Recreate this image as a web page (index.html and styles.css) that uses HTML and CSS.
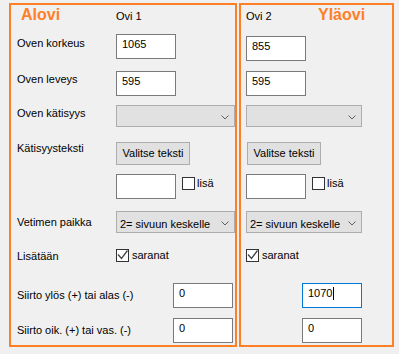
FILE: index.html
```html
<!DOCTYPE html>
<html>
<head>
<meta charset="utf-8">
<link rel="stylesheet" href="styles.css">
</head>
<body>
  <div class="form">
    <!-- Alovi -->
    <div class="panel panel-left">
      <div class="header">
        <span class="title title-left">Alovi</span>
        <span>Ovi 1</span>
      </div>
      <div class="row r1">
        <div class="label">Oven korkeus</div>
        <div class="textbox">1065</div>
      </div>
      <div class="row r2">
        <div class="label">Oven leveys</div>
        <div class="textbox">595</div>
      </div>
      <div class="row r3">
        <div class="label">Oven kätisyys</div>
        <div class="select select-left">
          <span></span>
          <svg class="chevron" width="8" height="5" viewBox="0 0 8 5"><polyline points="0.5,0.5 4,4 7.5,0.5" fill="none" stroke="#606060" stroke-width="1"/></svg>
        </div>
      </div>
      <div class="row r4">
        <div class="label">Kätisyysteksti</div>
        <button class="button">Valitse teksti</button>
      </div>
      <div class="row r5">
        <div class="label"></div>
        <div class="textbox"></div>
        <div class="check check-extra">
          <span class="box"></span>
          <span>lisä</span>
        </div>
      </div>
      <div class="row r6">
        <div class="label">Vetimen paikka</div>
        <div class="select select-left">
          <span>2= sivuun keskelle</span>
          <svg class="chevron" width="8" height="5" viewBox="0 0 8 5"><polyline points="0.5,0.5 4,4 7.5,0.5" fill="none" stroke="#606060" stroke-width="1"/></svg>
        </div>
      </div>
      <div class="row r7">
        <div class="label">Lisätään</div>
        <div class="check">
          <span class="box"><svg width="11" height="11" viewBox="0 0 11 11"><polyline points="1,4.5 4.5,8.5 10.5,0.5" fill="none" stroke="#444" stroke-width="1.3"/></svg></span>
          <span class="check-text">saranat</span>
        </div>
      </div>
      <div class="row r8">
        <div class="label label-wide">Siirto ylös (+) tai alas (-)</div>
        <div class="textbox">0</div>
      </div>
      <div class="row r9">
        <div class="label label-wide">Siirto oik. (+) tai vas. (-)</div>
        <div class="textbox">0</div>
      </div>
    </div>

    <!-- Yläovi -->
    <div class="panel panel-right">
      <div class="header">
        <span class="title-right-tag">Ovi 2</span>
        <span class="title">Yläovi</span>
      </div>
      <div class="row r1">
        <div class="textbox nudge">855</div>
      </div>
      <div class="row r2">
        <div class="textbox">595</div>
      </div>
      <div class="row r3">
        <div class="select select-right">
          <span></span>
          <svg class="chevron" width="8" height="5" viewBox="0 0 8 5"><polyline points="0.5,0.5 4,4 7.5,0.5" fill="none" stroke="#606060" stroke-width="1"/></svg>
        </div>
      </div>
      <div class="row r4">
        <button class="button button-right">Valitse teksti</button>
      </div>
      <div class="row r5">
        <div class="textbox"></div>
        <div class="check check-extra">
          <span class="box"></span>
          <span>lisä</span>
        </div>
      </div>
      <div class="row r6">
        <div class="select select-right">
          <span>2= sivuun keskelle</span>
          <svg class="chevron" width="8" height="5" viewBox="0 0 8 5"><polyline points="0.5,0.5 4,4 7.5,0.5" fill="none" stroke="#606060" stroke-width="1"/></svg>
        </div>
      </div>
      <div class="row r7">
        <div class="check">
          <span class="box"><svg width="11" height="11" viewBox="0 0 11 11"><polyline points="1,4.5 4.5,8.5 10.5,0.5" fill="none" stroke="#444" stroke-width="1.3"/></svg></span>
          <span class="check-text">saranat</span>
        </div>
      </div>
      <div class="row r8">
        <div class="textbox textbox-offset focused">1070<span class="caret"></span></div>
      </div>
      <div class="row r9">
        <div class="textbox textbox-offset">0</div>
      </div>
    </div>
  </div>
</body>
</html>
```

FILE: styles.css
```css
/* Windows-form look: grey surface, orange group frames */
body {
  margin: 0;
  background: #f0f0f0;
  font-family: "Liberation Sans", Arial, sans-serif;
  font-size: 11px;
  line-height: 13px;
  color: #000;
}

.form {
  display: flex;
  gap: 2px;
  padding: 3px 0 0 9px;
}

.panel {
  box-sizing: border-box;
  height: 344px;
  border: 2px solid #ff7f27;
}

.panel-left {
  width: 228px;
}

.panel-right {
  width: 155px;
}

.header {
  box-sizing: border-box;
  display: flex;
  align-items: baseline;
  height: 29px;
  padding-top: 1px;
}

.panel-left .header {
  padding-left: 10px;
}

.panel-right .header {
  padding-left: 5px;
}

.title {
  font-size: 16px;
  line-height: 18px;
  font-weight: bold;
  color: #ff7f27;
}

.title-left {
  width: 95px;
}

.title-right-tag {
  width: 72px;
}

/* rows: heights follow the control positions of the form */
.row {
  display: flex;
  align-items: flex-start;
}

.panel-right .row {
  padding-left: 5px;
}

.r1 { height: 37px; }
.r2 { height: 34px; }
.r3 { height: 37px; }
.r4 { height: 32px; }
.r5 { height: 37px; }
.r6 { height: 38px; }
.r7 { height: 34px; }
.r8 { height: 35px; }
.r9 { height: 25px; }

.label {
  width: 99px;
  margin-left: 6px;
}

.label-wide {
  width: 156px;
}

.r1 .label { padding-top: 3px; }
.r2 .label { padding-top: 2px; }
.r3 .label { padding-top: 2px; }
.r6 .label { padding-top: 5px; }
.r7 .label { padding-top: 1px; }
.r8 .label { padding-top: 6px; }
.r9 .label { padding-top: 6px; }

.textbox {
  box-sizing: border-box;
  width: 60px;
  height: 25px;
  padding: 3px 0 0 5px;
  border: 1px solid #7a7a7a;
  background: #fff;
  white-space: nowrap;
}

.textbox.nudge {
  margin-top: 2px;
}

.textbox-offset {
  margin-left: 56px;
}

.textbox.focused {
  border-color: #0078d7;
}

.caret {
  display: inline-block;
  width: 1px;
  height: 13px;
  margin-left: 1px;
  background: #000;
  vertical-align: top;
}

.select {
  box-sizing: border-box;
  display: flex;
  justify-content: space-between;
  align-items: flex-start;
  height: 22px;
  padding: 5px 5px 0 3px;
  line-height: 14px;
  border: 1px solid #adadad;
  background: #e1e1e1;
}

.select-left {
  width: 119px;
}

.select-right {
  width: 116px;
}

.chevron {
  margin-top: 4px;
}

.button {
  box-sizing: border-box;
  width: 74px;
  height: 23px;
  padding: 0;
  border: 1px solid #adadad;
  background: #e1e1e1;
  font: inherit;
  line-height: 13px;
  color: #000;
}

.button-right {
  margin-left: 1px;
}

.check {
  display: flex;
  align-items: flex-start;
  gap: 2px;
}

.check-extra {
  margin: 3px 0 0 6px;
}

.check-text {
  margin-left: 1px;
}

.box {
  box-sizing: border-box;
  display: flex;
  width: 13px;
  height: 13px;
  border: 1px solid #333;
  background: #fff;
}
```
